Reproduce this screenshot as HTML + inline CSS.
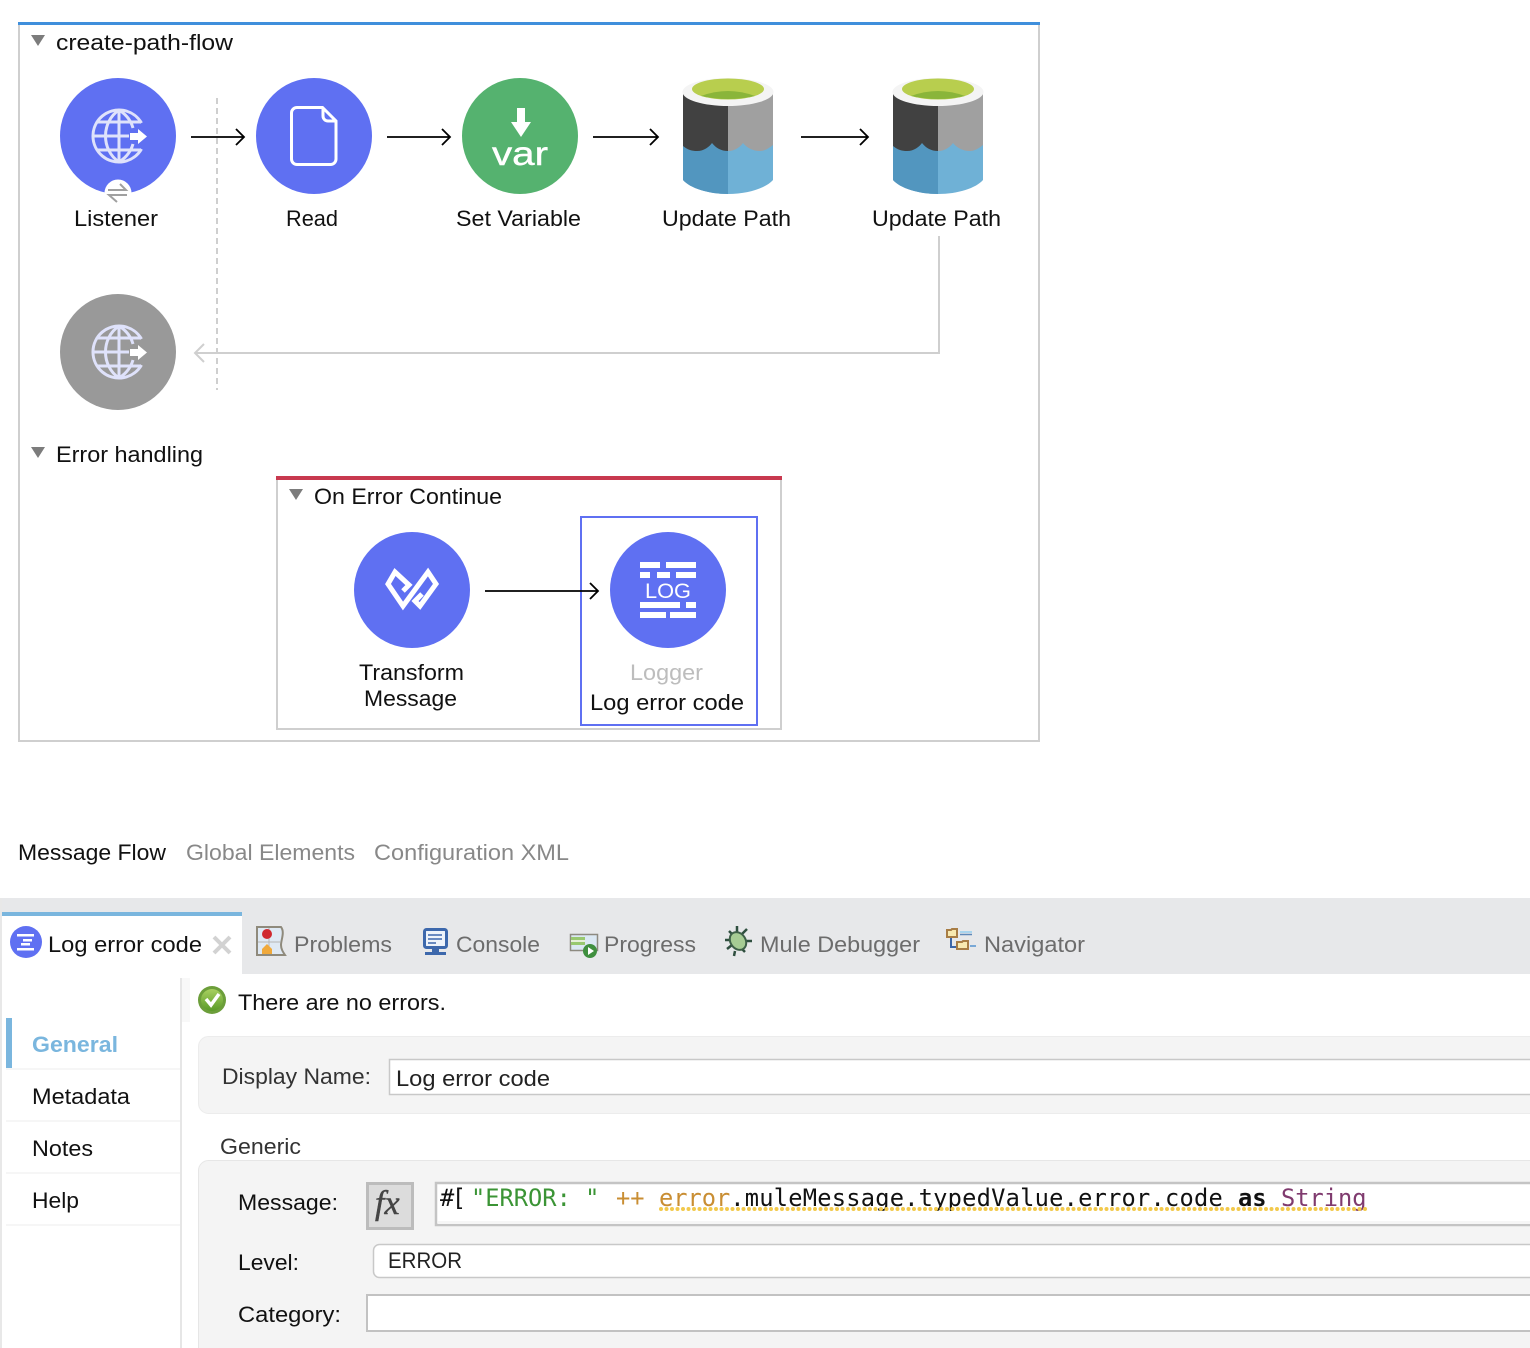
<!DOCTYPE html>
<html lang="en">
<head>
<meta charset="utf-8">
<title>create-path-flow</title>
<style>
html,body{margin:0;padding:0;background:#fff;width:1530px;height:1348px;overflow:hidden}
svg{display:block}
text{font-family:"Liberation Sans",sans-serif;font-size:22px;fill:#111}
.g{fill:#6c6c6c}
.m{font-family:"DejaVu Sans Mono","Liberation Mono",monospace;font-size:23.7px;fill:#111}
</style>
</head>
<body>
<svg width="1530" height="1348" viewBox="0 0 1530 1348" xmlns="http://www.w3.org/2000/svg">
<defs>
<g id="globe" fill="none">
  <g stroke="#dfe2fb" stroke-width="3">
    <path d="M141.500 123A26 26 0 1 0 141.500 149"/>
    <path d="M119 110V162"/>
    <path d="M119 110C101 122 101 150 119 162"/>
    <path d="M119 110C127 115 131 121 133 128"/>
    <path d="M119 162C127 157 131 151 133 144"/>
    <path d="M97 122H141"/>
    <path d="M97 150H141"/>
    <path d="M93 136H129"/>
  </g>
  <path d="M130 133H138V129L147 136.500L138 144V140H130Z" fill="#fff"/>
</g>
<g id="db">
  <path d="M683 92V180C690 188 708 194 728 194C748 194 766 188 773 180V92Z" fill="#6fb1d6"/>
  <path d="M683 92V180C690 188 708 194 728 194V92Z" fill="#5296bf"/>
  <path d="M683 92V146C688 150 692 151 697 151C704 151 709 147 712 143C716 148 721 151 728 151V92Z" fill="#414141"/>
  <path d="M728 92V151C735 151 740 147 743 143C747 148 753 151 760 151C765 151 769 148 773 145V92Z" fill="#a0a0a0"/>
  <ellipse cx="728" cy="92" rx="45.500" ry="14" fill="#f4f4f4"/>
  <ellipse cx="728" cy="89" rx="36" ry="10.500" fill="#b8ce4e"/>
  <path d="M701 96Q728 86 755 96Q728 102 701 96Z" fill="#8ab53a"/>
</g>
<linearGradient id="chk" x1="0" y1="0" x2="0" y2="1"><stop offset="0" stop-color="#a8d060"/><stop offset="1" stop-color="#5a9a28"/></linearGradient>
</defs>

<!-- Flow container -->
<rect x="19" y="23" width="1020" height="718" fill="#fff" stroke="#cfcfcf" stroke-width="2"/>
<rect x="18" y="22" width="1022" height="3" fill="#3f8fdc"/>
<path d="M31 35H45L38 46Z" fill="#7c7c7c"/>
<text x="56" y="50" textLength="177" lengthAdjust="spacingAndGlyphs">create-path-flow</text>

<!-- Dashed line -->
<path d="M217 98V390" stroke="#cfcfcf" stroke-width="2" stroke-dasharray="6 4" fill="none"/>

<!-- Circles row 1 -->
<circle cx="118" cy="136" r="58" fill="#5f70f2"/>
<use href="#globe"/>
<circle cx="118" cy="193" r="13.500" fill="#fff"/>
<path d="M108 190H126L120 184M127 195H109L117 202" fill="none" stroke="#a0a0a0" stroke-width="2"/>
<text x="74" y="226" textLength="84" lengthAdjust="spacingAndGlyphs">Listener</text>

<circle cx="314" cy="136" r="58" fill="#5f70f2"/>
<path d="M297 107.500H322.500L336 121V159A5.500 5.500 0 0 1 330.500 164.500H297A5.500 5.500 0 0 1 291.500 159V113A5.500 5.500 0 0 1 297 107.500Z" fill="none" stroke="#fff" stroke-width="3"/>
<path d="M323 108V116A5 5 0 0 0 328 121H336" fill="none" stroke="#fff" stroke-width="3"/>
<text x="286" y="226" textLength="52" lengthAdjust="spacingAndGlyphs">Read</text>

<circle cx="520" cy="136" r="58" fill="#55b26f"/>
<path d="M517 108H525V122H531L521 137L511 122H517Z" fill="#fff"/>
<text x="492" y="165" textLength="56" lengthAdjust="spacingAndGlyphs" style="font-size:33px;fill:#fff;stroke:#fff;stroke-width:.4">var</text>
<text x="456" y="226" textLength="125" lengthAdjust="spacingAndGlyphs">Set Variable</text>

<use href="#db"/>
<text x="662" y="226" textLength="129" lengthAdjust="spacingAndGlyphs">Update Path</text>
<use href="#db" x="210"/>
<text x="872" y="226" textLength="129" lengthAdjust="spacingAndGlyphs">Update Path</text>

<!-- Arrows -->
<g fill="none" stroke="#000" stroke-width="1.800">
  <path d="M191 137H243M236 129L244 137L236 145"/>
  <path d="M387 137H449M442 129L450 137L442 145"/>
  <path d="M593 137H657M650 129L658 137L650 145"/>
  <path d="M801 137H867M860 129L868 137L860 145"/>
</g>

<!-- Return path -->
<path d="M939 236V353H195M204 344L195 353L204 362" fill="none" stroke="#cfcfcf" stroke-width="2"/>
<circle cx="118" cy="352" r="58" fill="#999"/>
<use href="#globe" y="216"/>

<!-- Error handling -->
<path d="M31 447H45L38 458Z" fill="#7c7c7c"/>
<text x="56" y="462" textLength="147" lengthAdjust="spacingAndGlyphs">Error handling</text>

<rect x="277" y="477" width="504" height="252" fill="#fff" stroke="#cfcfcf" stroke-width="2"/>
<rect x="276" y="476" width="506" height="4" fill="#c8394f"/>
<path d="M289 489H303L296 500Z" fill="#7c7c7c"/>
<text x="314" y="504" textLength="188" lengthAdjust="spacingAndGlyphs">On Error Continue</text>

<rect x="581" y="517" width="176" height="208" fill="#fff" stroke="#5f70f2" stroke-width="2"/>

<circle cx="412" cy="590" r="58" fill="#5f70f2"/>
<path d="M403 591L409 585L395 572L388 584L403 606L428 572L436 584L420 606L415 601L422 594" fill="none" stroke="#fff" stroke-width="5"/>
<text x="359" y="680" textLength="105" lengthAdjust="spacingAndGlyphs">Transform</text>
<text x="364" y="706" textLength="93" lengthAdjust="spacingAndGlyphs">Message</text>

<circle cx="668" cy="590" r="58" fill="#5f70f2"/>
<g fill="#fff">
  <rect x="640" y="562" width="20" height="6"/><rect x="666" y="562" width="30" height="6"/>
  <rect x="640" y="572" width="10" height="6"/><rect x="657" y="572" width="13" height="6"/><rect x="676" y="572" width="20" height="6"/>
  <rect x="640" y="602" width="40" height="6"/><rect x="686" y="602" width="10" height="6"/>
  <rect x="640" y="612" width="26" height="6"/><rect x="670" y="612" width="26" height="6"/>
</g>
<text x="645" y="598" textLength="46" lengthAdjust="spacingAndGlyphs" style="font-size:21px;fill:#fff">LOG</text>
<path d="M485 591H597M590 583L598 591L590 599" fill="none" stroke="#000" stroke-width="1.800"/>
<text x="630" y="680" textLength="73" lengthAdjust="spacingAndGlyphs" style="fill:#bdbdbd">Logger</text>
<text x="590" y="710" textLength="154" lengthAdjust="spacingAndGlyphs">Log error code</text>

<!-- Editor tabs -->
<text x="18" y="860" textLength="148" lengthAdjust="spacingAndGlyphs">Message Flow</text>
<text x="186" y="860" textLength="169" lengthAdjust="spacingAndGlyphs" style="fill:#888">Global Elements</text>
<text x="374" y="860" textLength="195" lengthAdjust="spacingAndGlyphs" style="fill:#888">Configuration XML</text>

<!-- View tab bar -->
<rect x="2" y="898" width="1528" height="76" fill="#e7e8ea"/>
<rect x="2" y="912" width="240" height="66" fill="#fff"/>
<rect x="2" y="912" width="240" height="4" fill="#7ab6de"/>
<rect x="0" y="898" width="2" height="450" fill="#e8e8e8"/>

<circle cx="26" cy="942" r="16" fill="#5f70f2"/>
<g fill="#fff">
  <rect x="17" y="934" width="17" height="2.500"/>
  <rect x="23" y="939" width="9" height="2.500"/>
  <rect x="21" y="943" width="9" height="2.500"/>
  <rect x="17" y="948" width="17" height="2.500"/>
</g>
<text x="48" y="952" textLength="154" lengthAdjust="spacingAndGlyphs">Log error code</text>
<path d="M214 937L230 953M230 937L214 953" stroke="#d2d2d2" stroke-width="4" fill="none"/>

<!-- Problems icon -->
<path d="M257 927H281C285 932 281 940 281 945C281 949 283 952 285 955H257Z" fill="#dfe9f4" stroke="#8f8a7c" stroke-width="2"/>
<path d="M258 942H280M269 928V954" stroke="#b5b5b5" stroke-width="1" fill="none"/>
<circle cx="267" cy="934" r="5" fill="#d0282f"/>
<path d="M262 954V949L267 944L272 949V954Z" fill="#f0a93c"/>
<text x="294" y="952" textLength="98" lengthAdjust="spacingAndGlyphs" class="g">Problems</text>

<!-- Console icon -->
<rect x="424.500" y="929.500" width="22" height="18" rx="2" fill="#eef3fa" stroke="#3d68ac" stroke-width="3"/>
<path d="M428 935H442M428 939H442M428 943H436" stroke="#3d68ac" stroke-width="1.500" fill="none"/>
<path d="M432 949H439V952H446V955H425V952H432Z" fill="#3d68ac"/>
<text x="456" y="952" textLength="84" lengthAdjust="spacingAndGlyphs" class="g">Console</text>

<!-- Progress icon -->
<rect x="570.500" y="934.500" width="27" height="16" fill="#dbe8f3" stroke="#8d8a80" stroke-width="1.500"/>
<rect x="571" y="937" width="14" height="8" fill="#98c870"/>
<rect x="571" y="940" width="14" height="2" fill="#e4efd8"/>
<circle cx="590" cy="951" r="7" fill="#3f8f3f"/>
<path d="M588 947L594 951L588 955Z" fill="#fff"/>
<text x="604" y="952" textLength="92" lengthAdjust="spacingAndGlyphs" class="g">Progress</text>

<!-- Debugger icon -->
<g stroke="#2f4f3f" stroke-width="2.500" fill="none">
  <path d="M729 931L733 935M737 926V933M747 929L742 934M725 940H731M745 941H752M727 949L732 945M741 948L745 952M735 951L734 956"/>
</g>
<ellipse cx="738" cy="941" rx="7.500" ry="9.500" transform="rotate(-35 738 941)" fill="#a6cc94" stroke="#3e6048" stroke-width="2"/>
<text x="760" y="952" textLength="160" lengthAdjust="spacingAndGlyphs" class="g">Mule Debugger</text>

<!-- Navigator icon -->
<path d="M951 938V947H958" fill="none" stroke="#3b66a8" stroke-width="2"/>
<path d="M947 930H951L952 929H957V937H947Z" fill="#f8e9b0" stroke="#a87d45" stroke-width="2"/>
<path d="M957 942H962L963 941H968V949H957Z" fill="#f8e9b0" stroke="#a87d45" stroke-width="2"/>
<path d="M960 932H972" stroke="#a8d4ee" stroke-width="2" fill="none"/>
<path d="M960 934.500H972" stroke="#5f88b8" stroke-width="1.500" fill="none"/>
<path d="M970 946H976" stroke="#79a8d6" stroke-width="2" fill="none"/>
<text x="984" y="952" textLength="101" lengthAdjust="spacingAndGlyphs" class="g">Navigator</text>

<!-- Sidebar -->
<rect x="180" y="978" width="2" height="370" fill="#e6e6e6"/>
<rect x="182" y="978" width="8" height="44" fill="#f8f8f8"/>
<rect x="6" y="1018" width="6" height="50" fill="#7ab6de"/>
<g fill="#f6f6f6">
  <rect x="6" y="1068" width="174" height="2"/>
  <rect x="6" y="1120" width="174" height="2"/>
  <rect x="6" y="1172" width="174" height="2"/>
  <rect x="6" y="1224" width="174" height="2"/>
</g>
<text x="32" y="1052" textLength="86" lengthAdjust="spacingAndGlyphs" style="font-weight:bold;fill:#7ab6de">General</text>
<text x="32" y="1104" textLength="98" lengthAdjust="spacingAndGlyphs">Metadata</text>
<text x="32" y="1156" textLength="61" lengthAdjust="spacingAndGlyphs">Notes</text>
<text x="32" y="1208" textLength="47" lengthAdjust="spacingAndGlyphs">Help</text>

<!-- Status -->
<circle cx="212" cy="1000" r="14" fill="#6c9e3a"/>
<circle cx="212" cy="1000" r="11" fill="url(#chk)"/>
<path d="M206 999L211 1005L219 994" fill="none" stroke="#fff" stroke-width="3.500"/>
<text x="238" y="1010" textLength="208" lengthAdjust="spacingAndGlyphs">There are no errors.</text>

<!-- Display Name panel -->
<rect x="198.500" y="1036.500" width="1345" height="77" rx="10" fill="#f4f4f4" stroke="#ececec"/>
<text x="222" y="1084" textLength="149" lengthAdjust="spacingAndGlyphs" style="fill:#333">Display Name:</text>
<rect x="389.500" y="1059.500" width="1150" height="35" fill="#fff" stroke="#c8c8c8" stroke-width="1.500"/>
<text x="396" y="1086" textLength="154" lengthAdjust="spacingAndGlyphs" style="fill:#222">Log error code</text>

<!-- Generic panel -->
<text x="220" y="1154" textLength="81" lengthAdjust="spacingAndGlyphs" style="fill:#333">Generic</text>
<rect x="198.500" y="1160.500" width="1345" height="200" rx="10" fill="#f4f4f4" stroke="#e6e6e6"/>

<text x="238" y="1210" textLength="100" lengthAdjust="spacingAndGlyphs">Message:</text>
<rect x="367.500" y="1183.500" width="45" height="45" fill="#dcdcdc" stroke="#bcbcbc" stroke-width="3"/>
<text x="375" y="1214" style="font-family:'Liberation Serif',serif;font-style:italic;font-size:34px;fill:#444;stroke:#444;stroke-width:.5">fx</text>

<rect x="436" y="1183" width="1110" height="42" fill="#fff" stroke="#c4c4c4" stroke-width="2.500"/>
<rect x="438" y="1221" width="1092" height="3" fill="#f6f6f6"/>
<text class="m" y="1206"><tspan x="440" style="letter-spacing:-2.500px">#[</tspan><tspan x="471" style="fill:#3b9435">"ERROR: "</tspan><tspan x="616" style="fill:#c98e33">++</tspan><tspan x="659" style="fill:#c98e33">error</tspan><tspan x="730.300" style="letter-spacing:.23px">.muleMessage.typedValue.error.code</tspan><tspan x="1238" style="font-weight:bold">as</tspan><tspan x="1281" style="fill:#7f3a6e">String</tspan></text>
<path d="M661 1209H1366" stroke="#f2c94c" stroke-width="4" stroke-linecap="round" stroke-dasharray="0 5.500" fill="none"/>

<text x="238" y="1270" textLength="61" lengthAdjust="spacingAndGlyphs">Level:</text>
<rect x="373.500" y="1244.500" width="1170" height="33" rx="6" fill="#fff" stroke="#c8c8c8" stroke-width="1.500"/>
<text x="388" y="1268" textLength="74" lengthAdjust="spacingAndGlyphs" style="fill:#222">ERROR</text>

<text x="238" y="1322" textLength="103" lengthAdjust="spacingAndGlyphs">Category:</text>
<rect x="367" y="1295" width="1175" height="36" fill="#fff" stroke="#c2c2c2" stroke-width="2"/>
</svg>
</body>
</html>
